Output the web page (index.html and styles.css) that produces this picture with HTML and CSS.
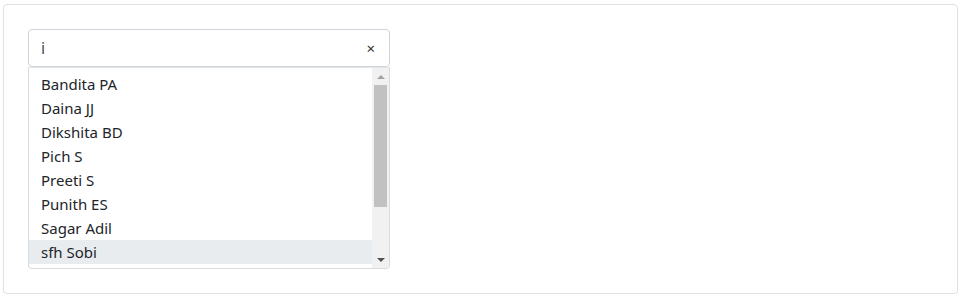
FILE: index.html
```html
<!DOCTYPE html>
<html lang="en">
<head>
    <meta charset="UTF-8">
    <meta name="viewport" content="width=device-width, initial-scale=1.0">
    <title>Buscar persona</title>
    <link rel="stylesheet" href="styles.css">
</head>
<body>

    <div class="page">
        <div class="card">

            <div class="combo">
                <div class="combo-input">
                    <input class="input" type="text" value="i">
                    <span class="clear">&times;</span>
                </div>

                <div class="combo-list">
                    <ul class="options">
                        <li>Bandita PA</li>
                        <li>Daina JJ</li>
                        <li>Dikshita BD</li>
                        <li>Pich S</li>
                        <li>Preeti S</li>
                        <li>Punith ES</li>
                        <li>Sagar Adil</li>
                        <li class="active">sfh Sobi</li>
                    </ul>
                    <div class="scrollbar">
                        <div class="scroll-btn"><span class="arrow-up"></span></div>
                        <div class="scroll-track">
                            <div class="scroll-thumb"></div>
                        </div>
                        <div class="scroll-btn"><span class="arrow-down"></span></div>
                    </div>
                </div>
            </div>

        </div>
    </div>

</body>
</html>
```

FILE: styles.css
```css
html, body, div, span, ul, li {
    margin: 0;
    padding: 0;
    border: 0;
    font: inherit;
}
ul {
    list-style: none;
}

body {
    background-color: #fff;
    font-family: "Noto Sans", "Open Sans", sans-serif;
    font-size: 15px;
    color: #212529;
}

.page {
    padding: 4px 2px 0 3px;
}

.card {
    height: 290px;
    box-sizing: border-box;
    border: 1px solid #dfe1e5;
    border-radius: 4px;
    padding: 24px;
    box-shadow: 0 2px 2px rgba(0, 0, 0, 0.03);
}

.combo {
    width: 362px;
}

.combo-input {
    height: 38px;
    box-sizing: border-box;
    display: flex;
    align-items: center;
    border: 1px solid #ced4da;
    border-radius: 4px;
    padding: 0 12px;
}

.input {
    flex: 1;
    border: none;
    outline: none;
    padding: 0;
    font-family: inherit;
    font-size: 16px;
    color: #495057;
    background: transparent;
}

.clear {
    font-size: 15px;
    color: #333;
    line-height: 1;
    margin-right: 2px;
}

.combo-list {
    display: flex;
    height: 202px;
    box-sizing: border-box;
    border: 1px solid #d9dcdf;
    border-top-color: #e3e5e8;
    border-radius: 0 0 4px 4px;
    overflow: hidden;
}

.options {
    flex: 1;
    padding: 4px 0;
}

.options li {
    height: 24px;
    line-height: 24px;
    padding-left: 12px;
}

.options li.active {
    background-color: #e9ecef;
}

.scrollbar {
    width: 17px;
    display: flex;
    flex-direction: column;
    background-color: #f1f1f1;
}

.scroll-btn {
    height: 17px;
    display: flex;
    align-items: center;
    justify-content: center;
}

.arrow-up {
    width: 0;
    height: 0;
    border-left: 4px solid transparent;
    border-right: 4px solid transparent;
    border-bottom: 4px solid #a3a3a3;
}

.arrow-down {
    width: 0;
    height: 0;
    border-left: 4px solid transparent;
    border-right: 4px solid transparent;
    border-top: 4px solid #505050;
}

.scroll-track {
    flex: 1;
}

.scroll-thumb {
    height: 122px;
    margin: 0 2px;
    background-color: #c1c1c1;
}
```
